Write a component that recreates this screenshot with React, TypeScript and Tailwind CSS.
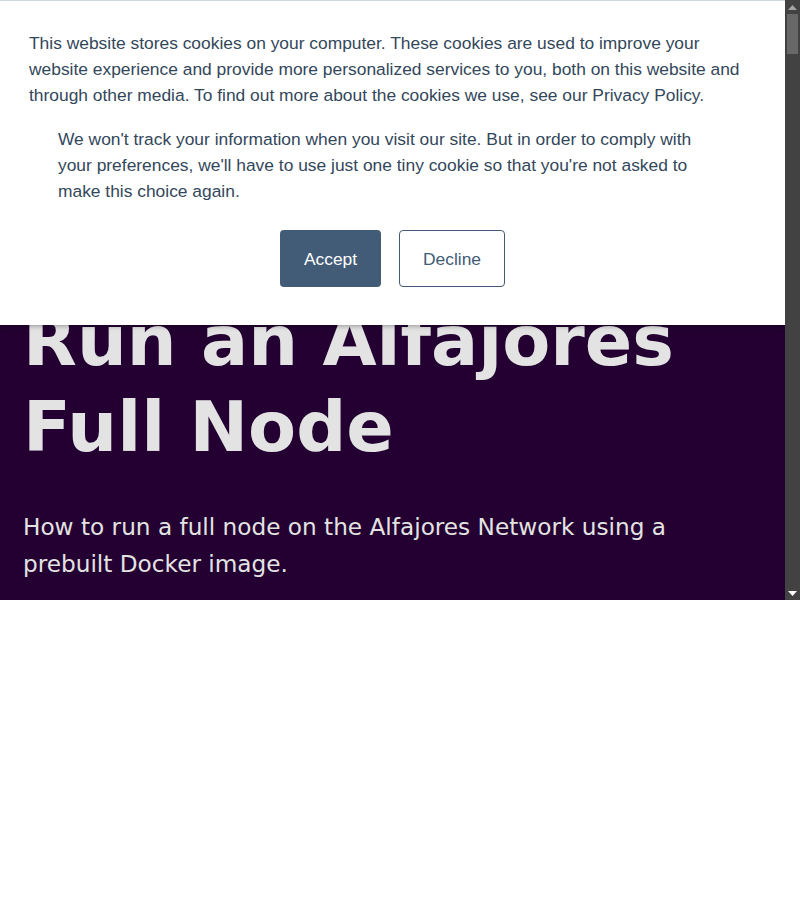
import React from "react";

export default function App() {
  return (
    <div className="w-[800px] h-[600px] flex overflow-hidden">
      <div className="relative w-[785px] h-full bg-[#230031] overflow-hidden">
        <div className="pt-[298px] pl-[23px] pr-[24px]">
          <h1
            className="text-[70px] leading-[86px] font-bold text-[#e3e3e3]"
            style={{ fontFamily: '"DejaVu Sans", sans-serif' }}
          >
            Run an Alfajores
            <br />
            Full Node
          </h1>
          <p
            className="mt-[38px] text-[23.2px] leading-[37px] text-[#e3e3e3] max-w-[700px]"
            style={{ fontFamily: '"DejaVu Sans", sans-serif' }}
          >
            How to run a full node on the Alfajores Network using a prebuilt Docker image.
          </p>
        </div>

        <div
          className="absolute top-0 left-0 right-0 bg-white border-t border-[#cbd6e2] shadow-[0_1px_5px_rgba(0,0,0,0.35)] px-[29px] pt-[29px] pb-[38px] text-[#33475b] text-[17.4px] leading-[26px]"
          style={{ fontFamily: '"Liberation Sans", Arial, sans-serif' }}
        >
          <p>
            This website stores cookies on your computer. These cookies are used to improve your
            website experience and provide more personalized services to you, both on this website
            and through other media. To find out more about the cookies we use, see our Privacy
            Policy.
          </p>
          <p className="mt-[18px] ml-[29px] max-w-[655px]">
            We won't track your information when you visit our site. But in order to comply with
            your preferences, we'll have to use just one tiny cookie so that you're not asked to
            make this choice again.
          </p>
          <div className="mt-[26px] flex justify-center gap-[18px]">
            <button className="w-[101px] h-[57px] rounded-[4px] bg-[#425b76] text-white text-[17.4px]">
              Accept
            </button>
            <button className="w-[106px] h-[57px] rounded-[4px] border border-[#425b76] bg-white text-[#425b76] text-[17.4px]">
              Decline
            </button>
          </div>
        </div>
      </div>

      <div className="w-[15px] h-full bg-[#424242] flex flex-col items-center">
        <div className="h-[14px] flex items-center justify-center">
          <svg width="9" height="5" viewBox="0 0 9 5">
            <polygon points="0,5 9,5 4.5,0" fill="#a3a3a3" />
          </svg>
        </div>
        <div className="w-[11px] h-[40px] bg-[#686868]" />
        <div className="flex-1" />
        <div className="h-[14px] flex items-center justify-center">
          <svg width="9" height="5" viewBox="0 0 9 5">
            <polygon points="0,0 9,0 4.5,5" fill="#ffffff" />
          </svg>
        </div>
      </div>
    </div>
  );
}
